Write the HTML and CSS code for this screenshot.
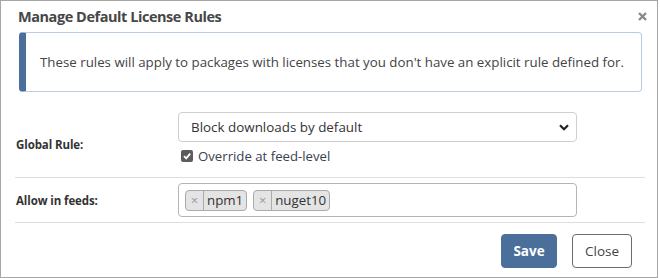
FILE: index.html
```html
<!DOCTYPE html>
<html>
<head>
<meta charset="utf-8">
<link rel="stylesheet" href="styles.css">
</head>
<body>
<div class="dialog">
  <div class="header">
    <h1 class="title">Manage Default License Rules</h1>
    <svg class="close-x" width="9" height="9" viewBox="0 0 9 9"><path d="M1 1 L8 8 M8 1 L1 8" stroke="#8a8a8a" stroke-width="2.4"/></svg>
  </div>
  <div class="alert">These rules will apply to packages with licenses that you don't have an explicit rule defined for.</div>
  <div class="row row-global">
    <div class="label">Global Rule:</div>
    <div class="field">
      <div class="select">
        <span>Block downloads by default</span>
        <svg class="chev" width="10" height="7" viewBox="0 0 10 7"><path d="M1 1.2 L5 5.2 L9 1.2" fill="none" stroke="#222" stroke-width="2.2"/></svg>
      </div>
      <label class="check">
        <span class="box"><svg width="10" height="10" viewBox="0 0 10 10"><path d="M2 5.2 L4.2 7.4 L8.2 2.6" fill="none" stroke="#fff" stroke-width="1.8"/></svg></span>
        <span>Override at feed-level</span>
      </label>
    </div>
  </div>
  <div class="row row-feeds">
    <div class="label">Allow in feeds:</div>
    <div class="field">
      <div class="tags">
        <span class="tag"><span class="tag-x">&#xd7;</span><span class="tag-t">npm1</span></span>
        <span class="tag"><span class="tag-x">&#xd7;</span><span class="tag-t">nuget10</span></span>
      </div>
    </div>
  </div>
  <div class="footer">
    <button class="btn btn-save">Save</button>
    <button class="btn btn-close">Close</button>
  </div>
</div>
</body>
</html>
```
FILE: styles.css
```css
* { box-sizing: border-box; }
body {
  margin: 0;
  font-family: "Open Sans", "Noto Sans", sans-serif;
  color: #444;
  background: #fff;
}
.dialog {
  width: 658px;
  height: 278px;
  border: 1px solid #a6a6a6;
  padding: 0 12px 0 14px;
}
.header {
  display: flex;
  justify-content: space-between;
  align-items: center;
  height: 31px;
  padding: 0 0 1px 3px;
}
.title {
  margin: 0;
  font-size: 14.5px;
  font-weight: 700;
  color: #474747;
  letter-spacing: -0.45px;
}
.close-x {
  display: block;
  margin-right: -2px;
  margin-top: 0;
}
.alert {
  margin-left: 4px;
  margin-right: 3px;
  height: 60px;
  border: 1px solid #bccbdd;
  border-left: 7px solid #4a6f9a;
  border-radius: 4px;
  display: flex;
  align-items: center;
  padding-left: 14px;
  font-size: 13.3px;
  color: #444;
}
.row {
  display: flex;
  align-items: center;
  border-bottom: 1px solid #dedede;
}
.row-global {
  margin-top: 20px;
  padding-bottom: 12px;
}
.row-feeds {
  padding: 5px 0 5px;
}
.label {
  width: 163px;
  padding-left: 1px;
  font-size: 11.5px;
  font-weight: 700;
  color: #333;
  letter-spacing: -0.1px;
}
.row-global .label { padding-top: 12px; }
.field {
  width: 399px;
}
.select {
  height: 30px;
  border: 1px solid #cfcfcf;
  border-radius: 4px;
  display: flex;
  align-items: center;
  justify-content: space-between;
  padding: 0 7px 0 12px;
  font-size: 13.4px;
  color: #333;
}
.chev { display: block; }
.check {
  display: flex;
  align-items: center;
  margin-top: 5px;
  padding-left: 3px;
  font-size: 13.2px;
  color: #3a4150;
}
.box {
  width: 12px;
  height: 12px;
  background: #5c5c5c;
  border-radius: 2px;
  display: flex;
  align-items: center;
  justify-content: center;
  margin-right: 5px;
}
.box svg { display: block; }
.tags {
  height: 34px;
  border: 1px solid #b5b5b5;
  border-radius: 4px;
  display: flex;
  align-items: center;
  gap: 6px;
  padding-left: 6px;
}
.tag {
  display: flex;
  align-items: stretch;
  height: 21px;
  background: #e4e4e4;
  border: 1px solid #aaa;
  border-radius: 4px;
  font-size: 13.3px;
  color: #333;
}
.tag-x {
  width: 18px;
  border-right: 1px solid #aaa;
  color: #999;
  display: flex;
  align-items: center;
  justify-content: center;
  font-size: 13px;
}
.tag-t {
  display: flex;
  align-items: center;
  padding: 0 3px 0 3px;
}
.footer {
  display: flex;
  justify-content: flex-end;
  gap: 15px;
  padding-top: 11px;
  padding-right: 13px;
}
.btn {
  height: 34px;
  border-radius: 4px;
  font-family: inherit;
  font-size: 13.5px;
  cursor: pointer;
}
.btn-save {
  width: 56px;
  background: #4a6f9a;
  border: 1px solid #4a6f9a;
  color: #fff;
  font-weight: 700;
}
.btn-close {
  width: 60px;
  background: #fff;
  border: 1px solid #6b6b6b;
  color: #444;
}
```
